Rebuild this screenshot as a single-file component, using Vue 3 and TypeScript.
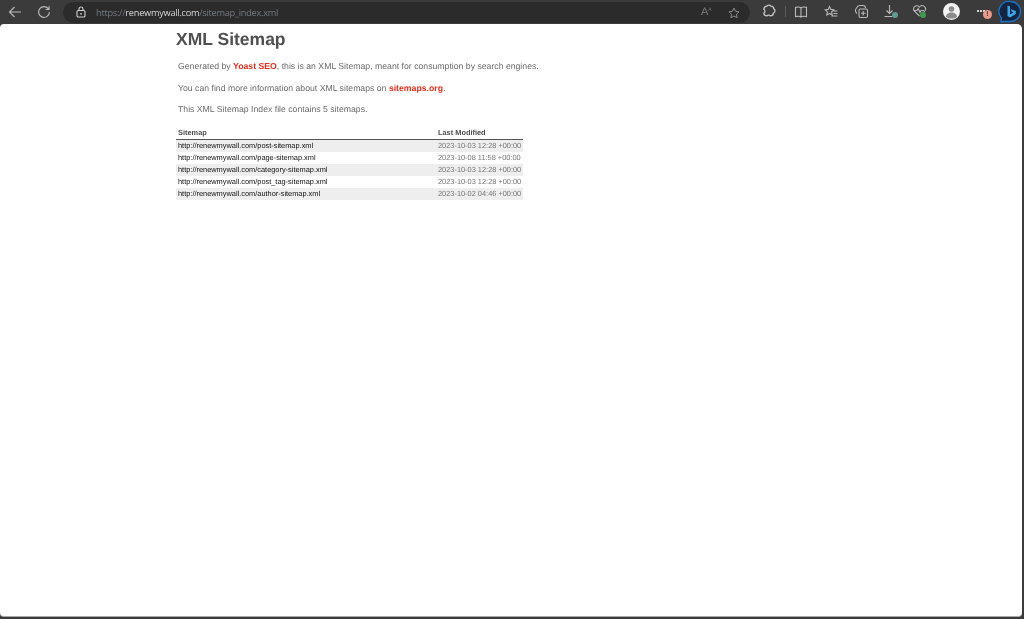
<template>
  <div class="window">
    <!-- browser toolbar -->
    <header class="toolbar">
      <button class="tool back">
        <svg width="14" height="14" viewBox="0 0 14 14"><path d="M13 7H1.500M6.500 2 1.500 7l5 5" /></svg>
      </button>
      <button class="tool reload">
        <svg width="14" height="14" viewBox="0 0 14 14"><path d="M11.600 4.200A5.400 5.400 0 1 0 12.400 7M12 1.200v3.300H8.700" /></svg>
      </button>
      <div class="address">
        <svg class="lock" width="10" height="12" viewBox="0 0 10 12"><rect x="1" y="4.500" width="8" height="6.500" rx="1.300" /><path d="M3 4.500V3a2 2 0 0 1 4 0v1.500" /><circle cx="5" cy="7.800" r=".9" class="fill" /></svg>
        <span class="url"><span class="dim">https://</span><span class="host">renewmywall.com</span><span class="dim">/sitemap_index.xml</span></span>
        <span class="read">A<sup>A</sup></span>
        <svg class="star" width="12" height="12" viewBox="0 0 14 14"><path d="m7 1.300 1.800 3.700 4 .6-2.900 2.800.7 4L7 10.500 3.400 12.400l.7-4L1.200 5.600l4-.6z" /></svg>
      </div>
      <div class="tools">
        <svg class="ic ext" width="14" height="14" viewBox="0 0 14 14"><path d="M5 2.200a2.200 2.200 0 0 1 3.800 0c2 .1 3 1 3 2.700a2.200 2.200 0 0 1-.2 4c-.2 2-1.300 3-3.200 3a2.200 2.200 0 0 0-3.400-.1C3 11.800 2 11 1.800 9.200a2.300 2.300 0 0 0 0-4C2 3.400 3 2.400 5 2.200z" /></svg>
        <span class="sep"></span>
        <svg class="ic split" width="14" height="14" viewBox="0 0 14 14"><path d="M7 3v9M7 3c-1-1-4-1-5.500-.6v9.200C3 11.200 6 11.200 7 12c1-.8 4-.8 5.500-.4V2.400C11 2 8 2 7 3z" /></svg>
        <svg class="ic fav" width="14" height="14" viewBox="0 0 14 14"><path d="m5.500 1.500 1.300 2.900 3 .4-2.200 2.100.6 3L5.500 8.400 2.800 9.900l.6-3L1.200 4.800l3-.4zM9.500 6h4M9.500 8.500h4M7.500 11h6" /></svg>
        <svg class="ic coll" width="15" height="15" viewBox="0 0 15 15"><path d="M3 9.500A4 4 0 0 1 2.500 4 4 4 0 0 1 6 1.500h3A2.500 2.500 0 0 1 11.500 4" /><rect x="5" y="5" width="8.500" height="8.500" rx="1.500" /><path d="M9.200 7v4.500M7 9.200h4.500" /></svg>
        <span class="badged dl">
          <svg class="ic" width="15" height="15" viewBox="0 0 15 15"><path d="M6.500 1v8M3.500 6.500l3 3 3-3M1.500 12.500h8" /></svg>
          <span class="dot teal"></span>
        </span>
        <span class="badged health">
          <svg class="ic" width="15" height="14" viewBox="0 0 15 14"><path d="M7.500 12 2.200 7A3.200 3.200 0 0 1 7.500 3a3.200 3.200 0 0 1 5.300 4L11 9M1.500 6.500h3.500l1.200-2 1.800 4 1-2h3" /></svg>
          <span class="dot green"></span>
        </span>
        <span class="avatar">
          <svg width="17" height="17" viewBox="0 0 17 17"><circle cx="8.500" cy="6" r="2.800" /><path d="M3 14c0-3 2.500-4.500 5.500-4.500S14 11 14 14c-1.500 1-3.500 1.500-5.500 1.500S4.500 15 3 14z" /></svg>
        </span>
        <span class="more">
          <span class="dots"><i></i><i></i><i></i></span>
          <span class="alert">!</span>
        </span>
        <span class="bing">
          <svg width="24" height="24" viewBox="0 0 24 24">
            <path class="bubble" d="M12.500 1.500a10 10 0 0 1 0 20H4.500l-1 .6c-.5.2-.7 0-.6-.5l.6-3.600A10 10 0 0 1 12.500 1.500z" />
            <path class="b" d="M9.500 5.500 12 6.500v8l3.500-2-1.700-.8-1-2.500 5 1.800v3l-5.800 3.500-2.500-1.500z" />
          </svg>
        </span>
      </div>
    </header>

    <!-- page -->
    <main class="page">
      <div class="content">
        <h1>XML Sitemap</h1>
        <p>Generated by <a>Yoast SEO</a>, this is an XML Sitemap, meant for consumption by search engines.</p>
        <p>You can find more information about XML sitemaps on <a>sitemaps.org</a>.</p>
        <p>This XML Sitemap Index file contains {{ rows.length }} sitemaps.</p>
        <table>
          <thead>
            <tr><th class="c1">Sitemap</th><th>Last Modified</th></tr>
          </thead>
          <tbody>
            <tr v-for="r in rows" :key="r.loc">
              <td class="c1 loc">{{ r.loc }}</td>
              <td class="mod">{{ r.mod }}</td>
            </tr>
          </tbody>
        </table>
      </div>
    </main>
  </div>
</template>

<script setup lang="ts">
const rows = [
  { loc: 'http://renewmywall.com/post-sitemap.xml', mod: '2023-10-03 12:28 +00:00' },
  { loc: 'http://renewmywall.com/page-sitemap.xml', mod: '2023-10-08 11:58 +00:00' },
  { loc: 'http://renewmywall.com/category-sitemap.xml', mod: '2023-10-03 12:28 +00:00' },
  { loc: 'http://renewmywall.com/post_tag-sitemap.xml', mod: '2023-10-03 12:28 +00:00' },
  { loc: 'http://renewmywall.com/author-sitemap.xml', mod: '2023-10-02 04:46 +00:00' },
]
</script>

<style>
html, body { margin: 0; background: #2e2e2e; overflow: hidden; }
</style>

<style scoped>
.window {
  width: 1024px;
  height: 619px;
  display: flex;
  flex-direction: column;
  background: #3b3b3b;
  font-family: 'Liberation Sans', Arial, sans-serif;
  text-rendering: geometricPrecision;
  filter: blur(.3px);
  overflow: hidden;
}

/* ===== toolbar ===== */
.toolbar {
  height: 24px;
  flex: none;
  display: flex;
  align-items: center;
  padding-left: 8px;
  box-sizing: border-box;
}
.toolbar svg { fill: none; stroke: #b9b9b9; stroke-width: 1.1; }
.tool {
  width: 14px;
  height: 14px;
  padding: 0;
  border: 0;
  background: none;
  display: flex;
}
.reload { margin-left: 15px; }
.address {
  width: 687px;
  height: 21px;
  margin-left: 12px;
  flex: none;
  display: flex;
  align-items: center;
  background: #2b2b2b;
  border-radius: 11px;
  padding-left: 13px;
  box-sizing: border-box;
  position: relative;
}
.toolbar .lock { stroke: #d0d0d0; }
.toolbar .lock .fill { fill: #d0d0d0; stroke: none; }
.url {
  margin-left: 10px;
  font-family: 'Open Sans', 'Liberation Sans', sans-serif;
  font-size: 9.200px;
  letter-spacing: -.25px;
  white-space: nowrap;
}
.dim { color: #717a82; }
.host { color: #d6d6d6; }
.read {
  position: absolute;
  left: 638px;
  top: 4px;
  color: #7c7c7c;
  font-size: 11px;
}
.read sup { font-size: 5px; vertical-align: 4px; }
.address .star { position: absolute; left: 665px; top: 5px; stroke: #8f8f8f; }
.tools {
  flex: 1;
  display: flex;
  align-items: center;
  position: relative;
  height: 24px;
}
.tools > * { position: absolute; }
.toolbar .ext { left: 12px; top: 4px; stroke: #c4c4c4; stroke-width: 1.300; }
.sep { left: 35px; top: 6px; width: 1px; height: 11px; background: #5c5c5c; }
.split { left: 44px; top: 5px; }
.fav { left: 74px; top: 5px; }
.coll { left: 104px; top: 4px; }
.dl { left: 133px; top: 4px; }
.health { left: 162px; top: 4px; }
.badged { width: 16px; height: 16px; }
.dot {
  position: absolute;
  width: 6px;
  height: 6px;
  border-radius: 50%;
  bottom: 2px;
}
.teal { background: #5d9c92; right: 1px; }
.green { background: #3f9b4c; right: 2px; }
.avatar {
  left: 193px;
  top: 3px;
  width: 17px;
  height: 17px;
  border-radius: 50%;
  background: #f2f2f2;
  overflow: hidden;
}
.toolbar .avatar svg { fill: #8b8b8b; stroke: none; }
.more { left: 226px; top: 4px; width: 22px; height: 16px; }
.dots {
  position: absolute;
  left: 1px;
  top: 6px;
  display: flex;
  gap: 1.500px;
}
.dots i {
  width: 1.500px;
  height: 1.500px;
  background: #d6d6d6;
}
.alert {
  position: absolute;
  left: 7px;
  top: 6px;
  width: 9px;
  height: 9px;
  border-radius: 50%;
  background: #e99a88;
  color: #3b3b3b;
  font-size: 7px;
  font-weight: 700;
  line-height: 9px;
  text-align: center;
}
.bing { left: 248px; top: 0; width: 24px; height: 24px; }
.toolbar .bing .bubble { fill: #14253f; stroke: #1a73c9; stroke-width: 1.300; }
.toolbar .bing .b { fill: #3aa7ea; stroke: none; }

/* ===== page ===== */
.page {
  height: 592px;
  margin-right: 2px;
  flex: none;
  background: #fff;
  border-radius: 4px 5px 4px 4px;
  border-bottom: 1px solid #a8a8a8;
  box-sizing: content-box;
}
.content {
  width: 347px;
  margin-left: 176px;
  padding-top: 4px;
  color: #4f4f4f;
}
h1 {
  margin: 0;
  font-size: 17.500px;
  line-height: 22px;
  font-weight: 700;
  color: #505050;
}
p {
  margin: 0;
  padding-left: 2px;
  font-size: 8.700px;
  line-height: 10px;
  white-space: nowrap;
  margin-top: 11.500px;
  color: #6a6a6a;
}
h1 + p { margin-top: 11px; }
a {
  color: #e0301e;
  font-weight: 700;
}
table {
  width: 347px;
  margin-top: 12px;
  border-collapse: collapse;
  table-layout: fixed;
  font-size: 7.400px;
}
th {
  height: 13px;
  padding: 0 0 0 2px;
  text-align: left;
  font-weight: 700;
  color: #4d4d4d;
  border-bottom: 1px solid #555;
}
th.c1, td.c1 { width: 258px; }
td {
  height: 12px;
  padding: 0 0 0 2px;
  white-space: nowrap;
  line-height: 12px;
}
tbody tr:nth-child(odd) { background: #eee; }
.loc { color: #111; }
.mod { color: #757575; }
</style>
